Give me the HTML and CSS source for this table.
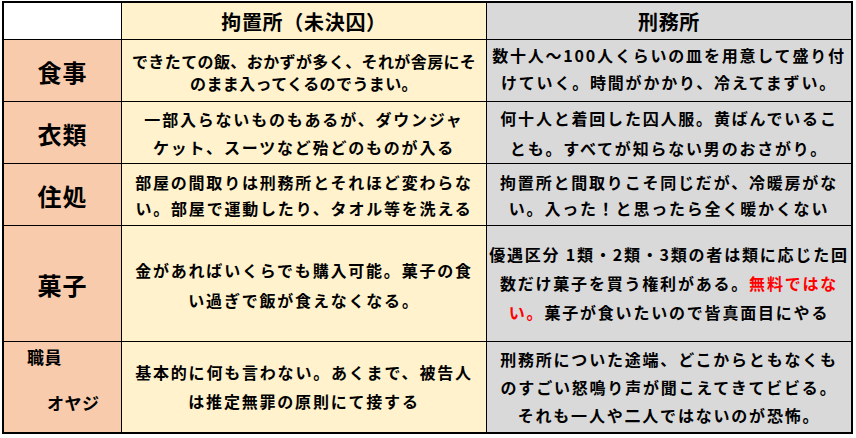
FILE: index.html
```html
<!DOCTYPE html>
<html lang="ja">
<head>
<meta charset="utf-8">
<title>拘置所と刑務所</title>
<link rel="stylesheet" href="styles.css">
</head>
<body>
<div class="sheet">
  <div class="cell head blank"></div>
  <div class="cell head cream"><span>拘置所（未決囚）</span></div>
  <div class="cell head gray last-col"><span>刑務所</span></div>

  <div class="cell label">食事</div>
  <div class="cell cream body lh22 tight pt3">
    <span>できたての飯、おかずが多く、それが舎房にそ</span>
    <span>のまま入ってくるのでうまい。</span>
  </div>
  <div class="cell gray body lh27 last-col pb4">
    <span>数十人～100人くらいの皿を用意して盛り付</span>
    <span>けていく。時間がかかり、冷えてまずい。</span>
  </div>

  <div class="cell label">衣類</div>
  <div class="cell cream body lh28">
    <span>一部入らないものもあるが、ダウンジャ</span>
    <span>ケット、スーツなど殆どのものが入る</span>
  </div>
  <div class="cell gray body lh30 last-col">
    <span>何十人と着回した囚人服。黄ばんでいるこ</span>
    <span>とも。すべてが知らない男のおさがり。</span>
  </div>

  <div class="cell label">住処</div>
  <div class="cell cream body lh26">
    <span>部屋の間取りは刑務所とそれほど変わらな</span>
    <span>い。部屋で運動したり、タオル等を洗える</span>
  </div>
  <div class="cell gray body lh26 last-col">
    <span>拘置所と間取りこそ同じだが、冷暖房がな</span>
    <span>い。入った！と思ったら全く暖かくない</span>
  </div>

  <div class="cell label">菓子</div>
  <div class="cell cream body lh30 pt2">
    <span>金があればいくらでも購入可能。菓子の食</span>
    <span>い過ぎで飯が食えなくなる。</span>
  </div>
  <div class="cell gray body lh29 last-col">
    <span>優遇区分 1類・2類・3類の者は類に応じた回</span>
    <span>数だけ菓子を買う権利がある。<em class="red">無料ではな</em></span>
    <span><em class="red">い。</em>菓子が食いたいので皆真面目にやる</span>
  </div>

  <div class="cell label staff last-row">
    <span class="staff-a">職員</span>
    <span class="staff-b">オヤジ</span>
  </div>
  <div class="cell cream body lh29 last-row">
    <span>基本的に何も言わない。あくまで、被告人</span>
    <span>は推定無罪の原則にて接する</span>
  </div>
  <div class="cell gray body lh28 last-col last-row">
    <span>刑務所についた途端、どこからともなくも</span>
    <span>のすごい怒鳴り声が聞こえてきてビビる。</span>
    <span>それも一人や二人ではないのが恐怖。</span>
  </div>
</div>
</body>
</html>
```

FILE: styles.css
```css
* { box-sizing: border-box; }

html, body {
  margin: 0;
  padding: 0;
  background: #ffffff;
}

body {
  width: 856px;
  height: 438px;
  overflow: hidden;
  font-family: "Noto Sans CJK JP", "Noto Sans", sans-serif;
  font-weight: 700;
  color: #000;
}

.sheet {
  margin: 1px 0 0 2px;
  width: 851px;
  height: 433px;
  border: 2px solid #000;
  border-bottom-width: 2.5px;
  display: grid;
  grid-template-columns: 118px 365px 364px;
  grid-template-rows: 37px 62px 62px 62px 116px 90px;
}

.cell {
  border-right: 1px solid #000;
  border-bottom: 1px solid #000;
  display: flex;
  flex-direction: column;
  align-items: center;
  justify-content: center;
  overflow: hidden;
  white-space: nowrap;
}

.last-col { border-right: none; }
.last-row { border-bottom: none; }

.blank { background: #ffffff; }
.cream { background: #fff2cc; }
.gray  { background: #d9d9d9; }

.head {
  font-size: 20px;
  letter-spacing: 0.7px;
  line-height: 24px;
  padding-top: 1px;
}

.label {
  background: #f8cbad;
  font-size: 24px;
  letter-spacing: 1px;
  line-height: 30px;
  padding-top: 2px;
}

.body {
  font-size: 16px;
  letter-spacing: 1.8px;
}

.body span { display: block; }

.tight { letter-spacing: 0.4px; }

.lh22 { line-height: 22px; }
.lh26 { line-height: 26px; }
.lh27 { line-height: 27px; }
.lh28 { line-height: 28px; }
.lh29 { line-height: 29px; }
.lh30 { line-height: 30px; }

.pt2 { padding-top: 2px; }
.pt3 { padding-top: 3px; }
.pb4 { padding-bottom: 4px; }

.red {
  color: #ff0000;
  font-style: normal;
}

.staff {
  align-items: flex-start;
  justify-content: flex-start;
  font-size: 17px;
  letter-spacing: 0.5px;
  line-height: 24px;
  padding-top: 3px;
}

.staff-a {
  display: block;
  margin-left: 23px;
}

.staff-b {
  display: block;
  margin-left: 43px;
  margin-top: 22px;
}
```
